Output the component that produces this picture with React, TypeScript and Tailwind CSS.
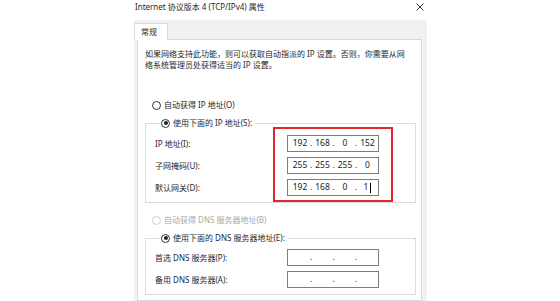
import React from "react";

type Octets = [string, string, string, string];

function Radio({ checked = false, disabled = false }: { checked?: boolean; disabled?: boolean }) {
  return (
    <span
      className={`flex items-center justify-center w-[9px] h-[9px] rounded-full border bg-white shrink-0 ${
        disabled ? "border-[#cfcfcf]" : "border-[#333333]"
      }`}
    >
      {checked && <span className="w-[4px] h-[4px] rounded-full bg-[#222222]" />}
    </span>
  );
}

function RadioLabel({ text, checked, disabled }: { text: string; checked?: boolean; disabled?: boolean }) {
  return (
    <span className={`flex items-center gap-[3px] h-[12px] ${disabled ? "text-[#a9a9a9]" : "text-[#1f1f1f]"}`}>
      <Radio checked={checked} disabled={disabled} />
      <span>{text}</span>
    </span>
  );
}

function IpBox({ value, caret = false }: { value: Octets; caret?: boolean }) {
  return (
    <div className="flex items-center w-[92px] h-[17px] border border-[#7d7d7d] bg-white pl-[3px] text-[8.5px] text-[#1a1a1a]">
      {value.map((o, i) => (
        <React.Fragment key={i}>
          {i > 0 && <span className="w-[4.5px] text-center">.</span>}
          <span className="w-[18px] flex items-center justify-center">
            {o}
            {caret && i === 3 && <span className="ml-[2px] w-px h-[10px] bg-black" />}
          </span>
        </React.Fragment>
      ))}
    </div>
  );
}

function Row({ label, value, caret }: { label: string; value: Octets; caret?: boolean }) {
  return (
    <div className="flex items-center h-[17px]">
      <span className="w-[132px]">{label}</span>
      <IpBox value={value} caret={caret} />
    </div>
  );
}

const empty: Octets = ["", "", "", ""];

export default function App() {
  return (
    <div className="w-[560px] h-[301px] bg-white overflow-hidden font-['Noto_Sans','Noto_Sans_CJK_SC',sans-serif] text-[8px] text-[#1f1f1f]">
      <div className="ml-[134px] w-[293px] h-full bg-[#f1f0f3] flex flex-col">
        {/* title bar */}
        <div className="h-[20px] bg-white flex items-start justify-between pt-[1px] pl-[1px] pr-[3px] leading-[12px]">
          <span>Internet 协议版本 4 (TCP/IPv4) 属性</span>
          <svg width="8" height="8" viewBox="0 0 8 8" className="mt-[2px]">
            <path d="M0.5 0.5 L7.5 7.5 M7.5 0.5 L0.5 7.5" stroke="#333" strokeWidth="1" />
          </svg>
        </div>

        {/* tabs */}
        <div className="h-[19px] flex items-end">
          <div className="h-[17px] w-[34px] bg-white border border-b-0 border-[#d9d9d9] pl-[6px] leading-[16px] -mb-px relative">
            常规
          </div>
        </div>

        {/* panel */}
        <div className="ml-[3px] w-[285px] flex-1 bg-white border border-[#d9d9d9] px-[7px] pt-[8px]">
          <p className="leading-[11px]">
            如果网络支持此功能，则可以获取自动指派的 IP 设置。否则，你需要从网
            <br />
            络系统管理员处获得适当的 IP 设置。
          </p>

          <div className="mt-[29px] pl-[7px]">
            <RadioLabel text="自动获得 IP 地址(O)" />
          </div>

          <fieldset className="mt-[6px] w-[271px] border border-[#dcdcdc] pl-[9px] pb-[6px]">
            <legend className="ml-[6px] pr-[3px]">
              <RadioLabel text="使用下面的 IP 地址(S):" checked />
            </legend>
            <div className="relative mt-[6px] flex flex-col gap-[5px]">
              <Row label="IP 地址(I):" value={["192", "168", "0", "152"]} />
              <Row label="子网掩码(U):" value={["255", "255", "255", "0"]} />
              <Row label="默认网关(D):" value={["192", "168", "0", "1"]} caret />
              <div className="pointer-events-none absolute left-[118px] top-[-8px] w-[120px] h-[75px] border-2 border-[#e3262b]" />
            </div>
          </fieldset>

          <div className="mt-[11px] pl-[7px]">
            <RadioLabel text="自动获得 DNS 服务器地址(B)" disabled />
          </div>

          <fieldset className="mt-[6px] w-[271px] border border-[#dcdcdc] pl-[9px] pb-[6px]">
            <legend className="ml-[6px] pr-[3px]">
              <RadioLabel text="使用下面的 DNS 服务器地址(E):" checked />
            </legend>
            <div className="mt-[5px] flex flex-col gap-[5px]">
              <Row label="首选 DNS 服务器(P):" value={empty} />
              <Row label="备用 DNS 服务器(A):" value={empty} />
            </div>
          </fieldset>
        </div>
      </div>
    </div>
  );
}
